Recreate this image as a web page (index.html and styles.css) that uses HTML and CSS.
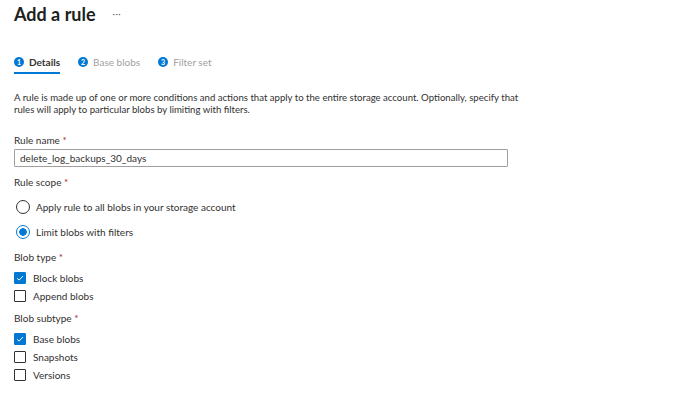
FILE: index.html
```html
<!DOCTYPE html>
<html lang="en">
<head>
  <meta charset="UTF-8">
  <title>Add a rule</title>
  <link rel="stylesheet" href="styles.css">
</head>
<body>

  <div class="header">
    <h1>Add a rule</h1>
    <span class="more">···</span>
  </div>

  <div class="tabs">
    <div class="tab active"><span class="num">1</span>Details</div>
    <div class="tab"><span class="num">2</span>Base blobs</div>
    <div class="tab"><span class="num">3</span>Filter set</div>
  </div>

  <p class="intro">A rule is made up of one or more conditions and actions that apply to the entire storage account. Optionally, specify that rules will apply to particular blobs by limiting with filters.</p>

  <div class="field first">
    <div class="label">Rule name <span class="req">*</span></div>
    <input type="text" class="text-input" value="delete_log_backups_30_days">
  </div>

  <div class="field scope">
    <div class="label">Rule scope <span class="req">*</span></div>
    <div class="radio-list">
      <div class="radio"><span class="dot"></span>Apply rule to all blobs in your storage account</div>
      <div class="radio checked"><span class="dot"></span>Limit blobs with filters</div>
    </div>
  </div>

  <div class="field">
    <div class="label">Blob type <span class="req">*</span></div>
    <div class="check-list">
      <div class="check checked"><span class="box"><svg width="12" height="12" viewBox="0 0 12 12"><path d="M3.2 6.3 L5.1 8.1 L9 4" fill="none" stroke="#fff" stroke-width="1"/></svg></span>Block blobs</div>
      <div class="check"><span class="box"></span>Append blobs</div>
    </div>
  </div>

  <div class="field sub">
    <div class="label">Blob subtype <span class="req">*</span></div>
    <div class="check-list">
      <div class="check checked"><span class="box"><svg width="12" height="12" viewBox="0 0 12 12"><path d="M3.2 6.3 L5.1 8.1 L9 4" fill="none" stroke="#fff" stroke-width="1"/></svg></span>Base blobs</div>
      <div class="check"><span class="box"></span>Snapshots</div>
      <div class="check"><span class="box"></span>Versions</div>
    </div>
  </div>

</body>
</html>
```

FILE: styles.css
```css
body {
  margin: 0;
  padding: 0 14px;
  font-family: Lato, "Noto Sans", sans-serif;
  font-size: 10px;
  color: #323130;
  background: #fff;
}
.header {
  display: flex;
  align-items: center;
  height: 28px;
}
.header h1 {
  margin: 0;
  font-size: 18px;
  font-weight: 700;
  color: #201f1e;
}
.more {
  margin-left: 17px;
  margin-top: -2px;
  font-size: 9px;
  color: #605e5c;
  letter-spacing: 0.5px;
}
.tabs {
  display: flex;
  gap: 18px;
  margin-top: 24px;
}
.tab {
  display: flex;
  align-items: center;
  gap: 5px;
  height: 20px;
  color: #a19f9d;
}
.tab.active {
  color: #323130;
  font-weight: 700;
  border-bottom: 2px solid #0078d4;
}
.num {
  width: 10px;
  height: 10px;
  border-radius: 50%;
  background: #0078d4;
  color: #fff;
  font-size: 7px;
  font-weight: 700;
  display: flex;
  align-items: center;
  justify-content: center;
}
.intro {
  margin: 18px 0 0;
  font-size: 9.6px;
  line-height: 12px;
  width: 520px;
}
.field {
  margin-top: 11px;
}
.field.first {
  margin-top: 17px;
}
.field.scope {
  margin-top: 8px;
}
.field.sub {
  margin-top: 9px;
}
.label {
  line-height: 14px;
}
.req {
  color: #a4262c;
}
.text-input {
  display: block;
  box-sizing: border-box;
  width: 494px;
  height: 18px;
  margin-top: 2px;
  border: 1px solid #a19f9d;
  border-radius: 1px;
  padding: 0 5px;
  font-family: inherit;
  font-size: 10px;
  color: #323130;
}
.radio-list {
  margin-top: 11px;
  display: flex;
  flex-direction: column;
  gap: 11px;
}
.radio {
  display: flex;
  align-items: center;
  gap: 6px;
  padding-left: 2px;
  height: 14px;
}
.dot {
  box-sizing: border-box;
  width: 14px;
  height: 14px;
  border-radius: 50%;
  border: 1px solid #323130;
}
.radio.checked .dot {
  border-color: #0078d4;
  background: radial-gradient(circle, #0078d4 0 3.5px, #fff 4px);
}
.check-list {
  margin-top: 8px;
  display: flex;
  flex-direction: column;
  gap: 6px;
}
.check {
  display: flex;
  align-items: center;
  gap: 7px;
  height: 12px;
}
.box {
  box-sizing: border-box;
  width: 12px;
  height: 12px;
  border: 1px solid #323130;
  border-radius: 1px;
  display: flex;
}
.check.checked .box {
  background: #0078d4;
  border-color: #0078d4;
}
.box svg {
  margin: -1px;
}
```
